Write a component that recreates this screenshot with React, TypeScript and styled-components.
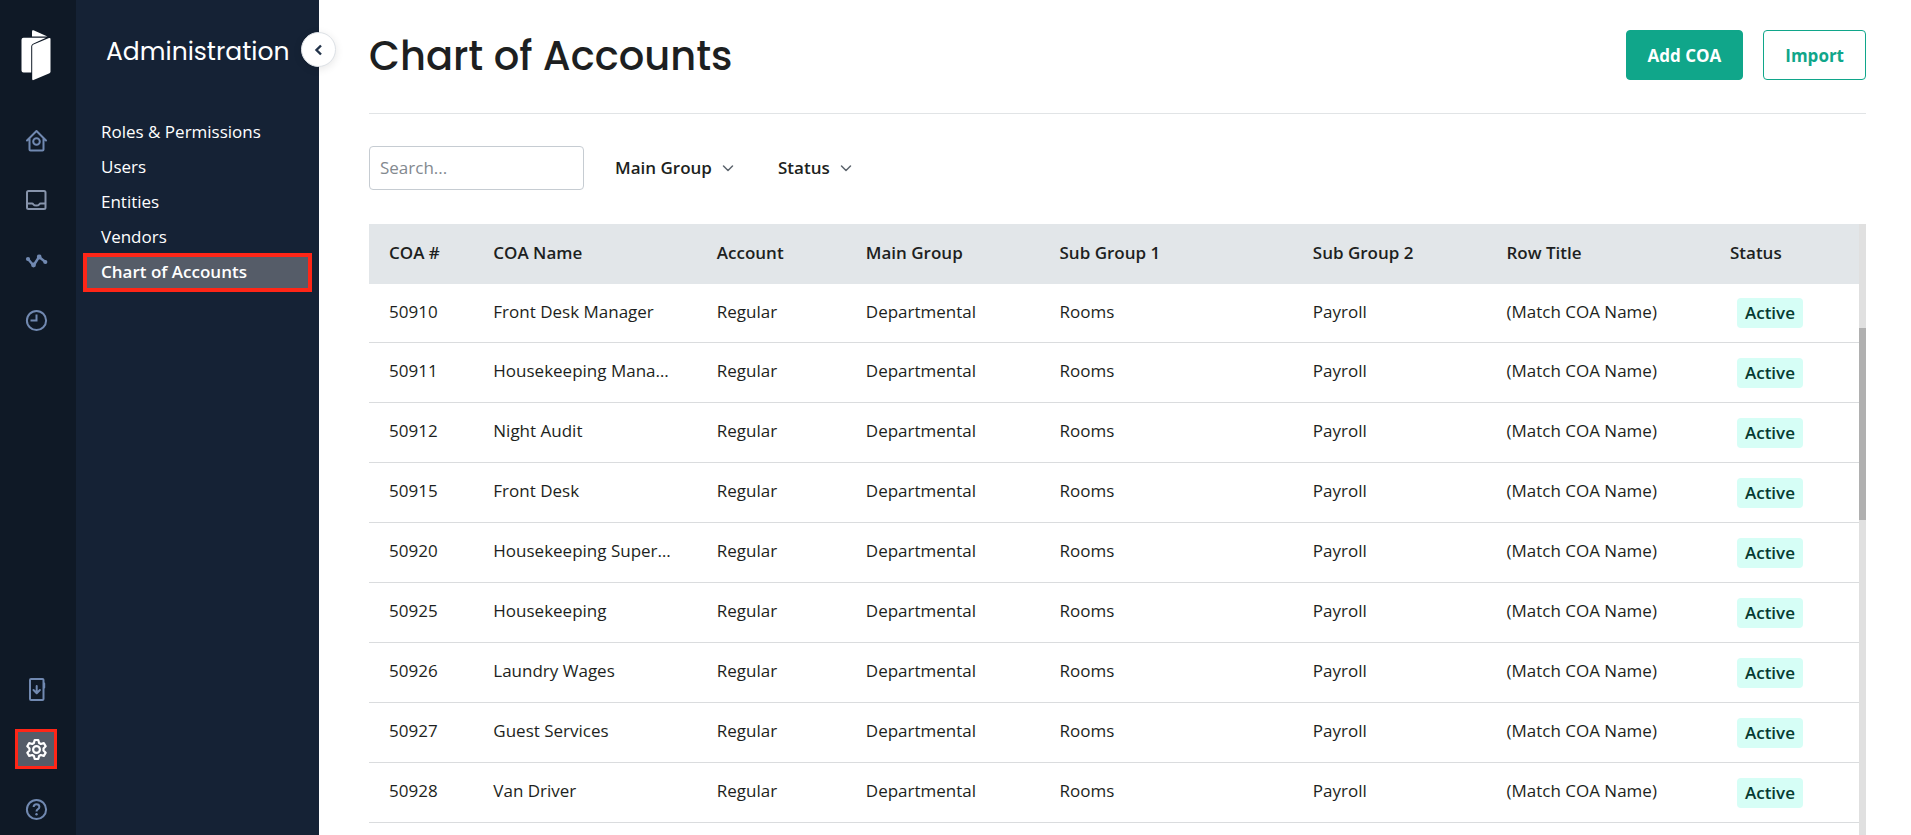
import React from 'react';
import styled, { createGlobalStyle } from 'styled-components';

const GlobalStyle = createGlobalStyle`
  * { box-sizing: border-box; }
  body {
    margin: 0;
    background: #fff;
    color: #1d1f21;
    font-family: "Open Sans", "Noto Sans", sans-serif;
    font-size: 17px;
    line-height: 24px;
  }
  button, input, select { font: inherit; color: inherit; }
`;

const displayFont = `Poppins, Inter, "Open Sans", sans-serif`;

const Page = styled.div`
  display: flex;
  height: 100vh;
  overflow: hidden;
`;

const Rail = styled.nav`
  flex: none;
  width: 76px;
  display: flex;
  flex-direction: column;
  justify-content: space-between;
  padding: 30px 15px 6px;
  background: #0f1926;
`;

const RailGroup = styled.div`
  display: flex;
  flex-direction: column;
  gap: 20px;
`;

const Brand = styled.a`
  display: block;
  width: 42px;
  height: 70px;
  svg { display: block; margin: 0 auto; }
`;

const RailLink = styled.a<{ $active?: boolean }>`
  display: flex;
  align-items: center;
  justify-content: center;
  width: 42px;
  height: 40px;
  color: ${(p) => (p.$active ? '#fff' : '#7189b1')};
  background: ${(p) => (p.$active ? '#555c68' : 'transparent')};
  border: ${(p) => (p.$active ? '3px solid #ff2617' : '0')};
`;

const Panel = styled.aside`
  position: relative;
  flex: none;
  width: 243px;
  padding: 32px 9px;
  background: #152235;
  color: #fff;
`;

const PanelTitle = styled.h2`
  margin: 0 0 43px;
  padding-left: 21px;
  font: 400 25px/40px ${displayFont};
`;

const Collapse = styled.button`
  position: absolute;
  z-index: 1;
  top: 32px;
  right: -17px;
  display: flex;
  align-items: center;
  justify-content: center;
  width: 35px;
  height: 35px;
  padding: 0;
  border: 1px solid #dde1e6;
  border-radius: 50%;
  background: #fff;
  color: #22334a;
  box-shadow: 0 2px 8px rgba(0, 0, 0, 0.1);
`;

const Menu = styled.ul`
  margin: 0;
  padding: 0;
  list-style: none;
`;

const MenuLink = styled.a<{ $active?: boolean }>`
  display: block;
  padding: 4px 16px 6px;
  line-height: 25px;
  color: #fff;
  text-decoration: none;
  font-weight: ${(p) => (p.$active ? 600 : 400)};
  background: ${(p) => (p.$active ? '#555c68' : 'transparent')};
  outline: ${(p) => (p.$active ? '4px solid #ff2617' : 'none')};
  outline-offset: -2px;
`;

const Main = styled.main`
  flex: 1;
  min-width: 0;
  display: flex;
  flex-direction: column;
  padding: 0 45px 0 50px;
`;

const Header = styled.header`
  flex: none;
  display: flex;
  align-items: center;
  gap: 20px;
  padding: 30px 0 33px;
  border-bottom: 1px solid #e1e4e6;
`;

const Title = styled.h1`
  flex: 1;
  margin: 0;
  font: 500 40px/52px ${displayFont};
  height: 50px;
`;

const Action = styled.button<{ $primary?: boolean }>`
  height: 50px;
  padding: 1px 21px 0;
  border: 1px solid #10a68a;
  border-radius: 4px;
  background: ${(p) => (p.$primary ? '#10a68a' : '#fff')};
  color: ${(p) => (p.$primary ? '#fff' : '#10a68a')};
  font-weight: 700;
`;

const Filters = styled.div`
  flex: none;
  display: flex;
  align-items: center;
  padding: 32px 0 34px;
`;

const Search = styled.input`
  width: 215px;
  height: 44px;
  margin-right: 31px;
  padding: 0 10px 2px;
  border: 1px solid #c6ccd2;
  border-radius: 4px;
  background: #fff;
  &::placeholder { color: #83898f; opacity: 1; }
`;

const Filter = styled.label`
  display: flex;
  align-items: center;
  gap: 10px;
  margin-right: 44px;
  svg { color: #5c646d; }
`;

const FilterSelect = styled.select`
  appearance: none;
  padding: 0;
  border: 0;
  background: transparent;
  font-weight: 600;
`;

const TableArea = styled.div`
  flex: 1;
  min-height: 0;
  display: flex;
`;

const TableView = styled.div`
  flex: 1;
  min-width: 0;
  overflow: hidden;
`;

const Table = styled.table`
  width: 100%;
  table-layout: fixed;
  border-collapse: separate;
  border-spacing: 0;
`;

const HeadCell = styled.th<{ $width: number }>`
  width: ${(p) => p.$width}%;
  height: 60px;
  padding: 0 24px 2px 20px;
  background: #e2e6e9;
  text-align: left;
  font-weight: 600;
  white-space: nowrap;
`;

const Cell = styled.td`
  height: 60px;
  padding: 0 24px 3px 20px;
  border-bottom: 1px solid #dadcde;
  overflow: hidden;
  white-space: nowrap;
  text-overflow: ellipsis;
  tr:first-child > & { height: 59px; }
`;

const StatusCell = styled(Cell)`
  padding: 0 12px 0 27px;
`;

const Badge = styled.span`
  display: inline-block;
  padding: 0 8px;
  border-radius: 4px;
  background: #d6fef6;
  color: #053b32;
  font-weight: 600;
  line-height: 30px;
  vertical-align: middle;
`;

const Scrollbar = styled.div`
  flex: none;
  width: 7px;
  padding-top: 104px;
  background: #e0e0e0;
`;

const Thumb = styled.div`
  height: 192px;
  background: #b0b0b0;
`;

const Icon = ({ children, size = 24, stroke = 2 }: { children: React.ReactNode; size?: number; stroke?: number }) => (
  <svg width={size} height={size} viewBox={`0 0 ${size} ${size}`} fill="none" stroke="currentColor"
    strokeWidth={stroke} strokeLinecap="round" strokeLinejoin="round" aria-hidden="true">
    {children}
  </svg>
);

const HomeIcon = () => (
  <Icon>
    <path d="M3 12.500 12.500 3l9.500 9.500M5.500 10.500v11q0 1 1 1h12q1 0 1-1v-11" />
    <circle cx="12.500" cy="13.500" r="3.300" />
  </Icon>
);

const InboxIcon = () => (
  <Icon>
    <g stroke="#8794ab">
      <rect x="3" y="3" width="18.500" height="18" rx="1.500" />
      <path d="M3.500 15.500H8q.8 0 1.300.8 1 1.200 3 1.200t3-1.200q.5-.8 1.300-.8h4.500" />
    </g>
  </Icon>
);

const TrendIcon = () => (
  <Icon stroke={2.4}>
    <path d="M4 11 9.500 17.500 15 9l6.500 5" />
    <g fill="currentColor" stroke="none">
      <circle cx="4" cy="11" r="2.100" />
      <circle cx="9.500" cy="17" r="2.400" />
      <circle cx="15.200" cy="9" r="2.400" />
      <circle cx="21.300" cy="14" r="2.100" />
    </g>
  </Icon>
);

const ClockIcon = () => (
  <Icon>
    <circle cx="12.500" cy="12.500" r="9.600" />
    <path d="M12.500 6.500v6H6.500" strokeLinecap="butt" strokeLinejoin="miter" />
  </Icon>
);

const DeviceIcon = () => (
  <Icon>
    <rect x="6" y="2" width="13.500" height="21" rx="1" />
    <path d="M20.200 6.500v4M12.700 9v6.500M9.500 13l3.200 3.200 3.200-3.200" />
  </Icon>
);

const GearIcon = () => (
  <Icon stroke={2.2}>
    <path d="M10.700 3h3.600l.8 3 1.700 1 3-.9 1.900 3.200-2.200 2.200v2l2.200 2.200-1.900 3.200-3-.9-1.700 1-.8 3h-3.600l-.8-3-1.700-1-3 .9-1.900-3.200 2.200-2.200v-2L3.300 9.300l1.900-3.200 3 .9 1.700-1z" />
    <circle cx="12.500" cy="12.500" r="3.400" />
  </Icon>
);

const HelpIcon = () => (
  <Icon>
    <circle cx="12.500" cy="12.500" r="9.600" />
    <path d="M9.600 10q.2-2.700 2.900-2.700t2.900 2.500q0 1.500-1.700 2.500-1.200.7-1.200 2.200" strokeLinecap="butt" />
    <circle cx="12.500" cy="17.200" r="1.200" fill="currentColor" stroke="none" />
  </Icon>
);

const ChevronDown = () => (
  <Icon size={12} stroke={1.5}>
    <path d="M1.500 4 6 8.500 10.500 4" />
  </Icon>
);

const Logo = () => (
  <svg width="30" height="52" viewBox="0 0 30 52" fill="#fff" aria-hidden="true">
    <path d="M11 6.500V1.500Q11-.3 12.500.3L26.500 6.500z" />
    <path d="M2.500 7.700H25L12 13.700q-1.800 1-1.800 2.800V42.500H2.500Q.5 42.500.5 40.500V9.700q0-2 2-2z" />
    <path d="M11.200 16.500q0-1.500 1.300-2.100L28 8q1.500-.5 1.500 1V41.500q0 1.200-1 1.700L12.500 50q-1.300.5-1.300-1z" />
  </svg>
);

const menuItems = ['Roles & Permissions', 'Users', 'Entities', 'Vendors', 'Chart of Accounts'];

const columns = [
  { label: 'COA #', width: 7 },
  { label: 'COA Name', width: 15 },
  { label: 'Account', width: 10 },
  { label: 'Main Group', width: 13 },
  { label: 'Sub Group 1', width: 17 },
  { label: 'Sub Group 2', width: 13 },
  { label: 'Row Title', width: 15 },
  { label: 'Status', width: 10 },
];

const accounts = [
  ['50910', 'Front Desk Manager'],
  ['50911', 'Housekeeping Manager'],
  ['50912', 'Night Audit'],
  ['50915', 'Front Desk'],
  ['50920', 'Housekeeping Supervisor'],
  ['50925', 'Housekeeping'],
  ['50926', 'Laundry Wages'],
  ['50927', 'Guest Services'],
  ['50928', 'Van Driver'],
];

export default function App() {
  return (
    <>
      <GlobalStyle />
      <Page>
        <Rail aria-label="Main">
          <RailGroup>
            <Brand href="#" aria-label="Start"><Logo /></Brand>
            <RailLink href="#" aria-label="Home"><HomeIcon /></RailLink>
            <RailLink href="#" aria-label="Inbox"><InboxIcon /></RailLink>
            <RailLink href="#" aria-label="Trends"><TrendIcon /></RailLink>
            <RailLink href="#" aria-label="History"><ClockIcon /></RailLink>
          </RailGroup>
          <RailGroup>
            <RailLink href="#" aria-label="Mobile app"><DeviceIcon /></RailLink>
            <RailLink href="#" aria-label="Settings" $active><GearIcon /></RailLink>
            <RailLink href="#" aria-label="Help"><HelpIcon /></RailLink>
          </RailGroup>
        </Rail>
        <Panel>
          <PanelTitle>Administration</PanelTitle>
          <Collapse type="button" aria-label="Collapse menu">
            <Icon size={14} stroke={2.4}><path d="M9 2.500 4.500 7 9 11.500" strokeLinecap="butt" strokeLinejoin="miter" /></Icon>
          </Collapse>
          <Menu>
            {menuItems.map((item) => (
              <li key={item}>
                <MenuLink href="#" $active={item === 'Chart of Accounts'}>{item}</MenuLink>
              </li>
            ))}
          </Menu>
        </Panel>
        <Main>
          <Header>
            <Title>Chart of Accounts</Title>
            <Action type="button" $primary>Add COA</Action>
            <Action type="button">Import</Action>
          </Header>
          <Filters>
            <Search type="text" placeholder="Search..." aria-label="Search" />
            {['Main Group', 'Status'].map((name) => (
              <Filter key={name}>
                <FilterSelect aria-label={name}><option>{name}</option></FilterSelect>
                <ChevronDown />
              </Filter>
            ))}
          </Filters>
          <TableArea>
            <TableView>
              <Table>
                <thead>
                  <tr>
                    {columns.map((c) => (
                      <HeadCell key={c.label} scope="col" $width={c.width}>{c.label}</HeadCell>
                    ))}
                  </tr>
                </thead>
                <tbody>
                  {accounts.map(([number, name]) => (
                    <tr key={number}>
                      <Cell>{number}</Cell>
                      <Cell>{name}</Cell>
                      <Cell>Regular</Cell>
                      <Cell>Departmental</Cell>
                      <Cell>Rooms</Cell>
                      <Cell>Payroll</Cell>
                      <Cell>(Match COA Name)</Cell>
                      <StatusCell><Badge>Active</Badge></StatusCell>
                    </tr>
                  ))}
                </tbody>
              </Table>
            </TableView>
            <Scrollbar aria-hidden="true"><Thumb /></Scrollbar>
          </TableArea>
        </Main>
      </Page>
    </>
  );
}
